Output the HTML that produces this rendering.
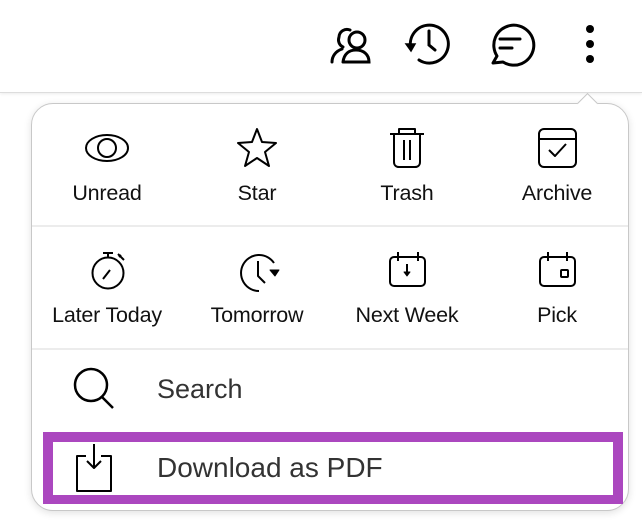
<!DOCTYPE html>
<html><head><style>
body{margin:0;width:642px;height:530px;background:#fff;position:relative;overflow:hidden;font-family:"Liberation Sans",sans-serif;}
.hdr{position:absolute;left:0;top:0;width:642px;height:92px;border-bottom:1px solid #ddd;box-shadow:0 1px 3px rgba(0,0,0,.08);}
.panel{position:absolute;left:31px;top:103px;width:596px;height:406px;border:1px solid #c8c8c8;border-radius:22px;background:#fff;box-shadow:0 2px 8px rgba(0,0,0,.12);}
.caret{position:absolute;left:580px;top:96px;width:14px;height:14px;background:#fff;border-left:1px solid #c8c8c8;border-top:1px solid #c8c8c8;transform:rotate(45deg);}
.lbl{position:absolute;width:150px;text-align:center;font-size:21.5px;color:#111;letter-spacing:-0.2px;}
.div{position:absolute;left:32px;width:596px;height:2px;background:#ececec;}
svg{position:absolute;overflow:visible}
.big{position:absolute;left:157px;color:#333;}
.pb{position:absolute;left:43px;top:432px;width:560px;height:53px;border:10px solid #ab47bf;border-bottom-width:9px;}
</style></head><body>
<div class="hdr"></div>
<div class="panel"></div>
<div class="caret"></div>
<svg width="642" height="92" style="left:0;top:0" fill="none" stroke="#000" stroke-width="3" stroke-linecap="round">
<circle cx="357" cy="40" r="8"/>
<path d="M343 62 H369 C369 54 363 50 356 50 C349 50 344 54 343 62"/>
<path d="M350 30 A8 8 0 0 0 339 37 A8 8 0 0 0 343 47"/>
<path d="M332 62 C332 56 336 51 342 49"/>
<path d="M411 49 A19 19 0 1 1 419 60"/>
<path d="M406 44 L411 51 L415 44 Z" fill="#000" stroke-width="1.5"/>
<path d="M429 31 V45 L435 50"/>
<path d="M493 63 L497 56 A20 20 0 1 1 503 62 Z" stroke-linejoin="round"/>
<path d="M500 39 H520 M500 48 H512"/>
</svg>
<svg width="20" height="40" style="left:580px;top:24px"><circle cx="10" cy="5" r="4"/><circle cx="10" cy="20" r="4"/><circle cx="10" cy="35" r="4"/></svg>
<svg width="642" height="530" style="left:0;top:0" fill="none" stroke="#000" stroke-width="2" stroke-linejoin="round">
<ellipse cx="107" cy="148" rx="21" ry="13"/><circle cx="107" cy="148" r="9"/>
<path d="M257 129 L262 142 L276 143 L265 152 L269 166 L257 158 L245 166 L249 152 L238 143 L252 142 Z"/>
<path d="M390 134 H424 M399 134 V129 H415 V134 M394 134 V162 C394 165 396 167 399 167 H415 C418 167 420 165 420 162 V134 M404 140 V160 M410 140 V160"/>
<rect x="539" y="129" width="37" height="38" rx="5"/><path d="M539 139 H576 M549 150 L555 156 L566 144"/>
<circle cx="108" cy="273" r="15.5"/><path d="M103 253 H113 M108 253 V257 M103 279 L110 270 M118 254 L124 260 M119 257 L121 255"/>
<path d="M259 291 A18 18 0 1 1 274 263 M258 261 V276 L265 283"/>
<path d="M270 270 L279 270 L275 276 Z" fill="#000" stroke-width="1"/>
<rect x="390" y="257" width="35" height="29" rx="4"/><path d="M398 252 V261 M418 252 V261 M407 264 V274"/><path d="M404 272 L410 272 L407 276 Z" fill="#000" stroke-width="1"/>
<rect x="540" y="257" width="35" height="29" rx="4"/><path d="M548 252 V261 M567 252 V261"/><rect x="561" y="270" width="7" height="7" rx="1"/>
<circle cx="91" cy="385" r="16" stroke-width="2.5"/><path d="M102 397 L113 408" stroke-width="2.5"/>
<path d="M86 456 H77 V491 H111 V456 H101" stroke-width="2"/><path d="M94 444 V468 M87 461 L94 468 L101 461" stroke-width="2"/>
</svg>
<div class="lbl" style="left:32px;top:181px">Unread</div>
<div class="lbl" style="left:182px;top:181px">Star</div>
<div class="lbl" style="left:332px;top:181px">Trash</div>
<div class="lbl" style="left:482px;top:181px">Archive</div>
<div class="div" style="top:225px"></div>
<div class="lbl" style="left:32px;top:303px">Later Today</div>
<div class="lbl" style="left:182px;top:303px">Tomorrow</div>
<div class="lbl" style="left:332px;top:303px">Next Week</div>
<div class="lbl" style="left:482px;top:303px">Pick</div>
<div class="div" style="top:348px"></div>
<div class="big" style="top:374px;font-size:27px">Search</div>
<div class="pb"></div>
<div class="big" style="top:452px;font-size:28px">Download as PDF</div>
</body></html>
